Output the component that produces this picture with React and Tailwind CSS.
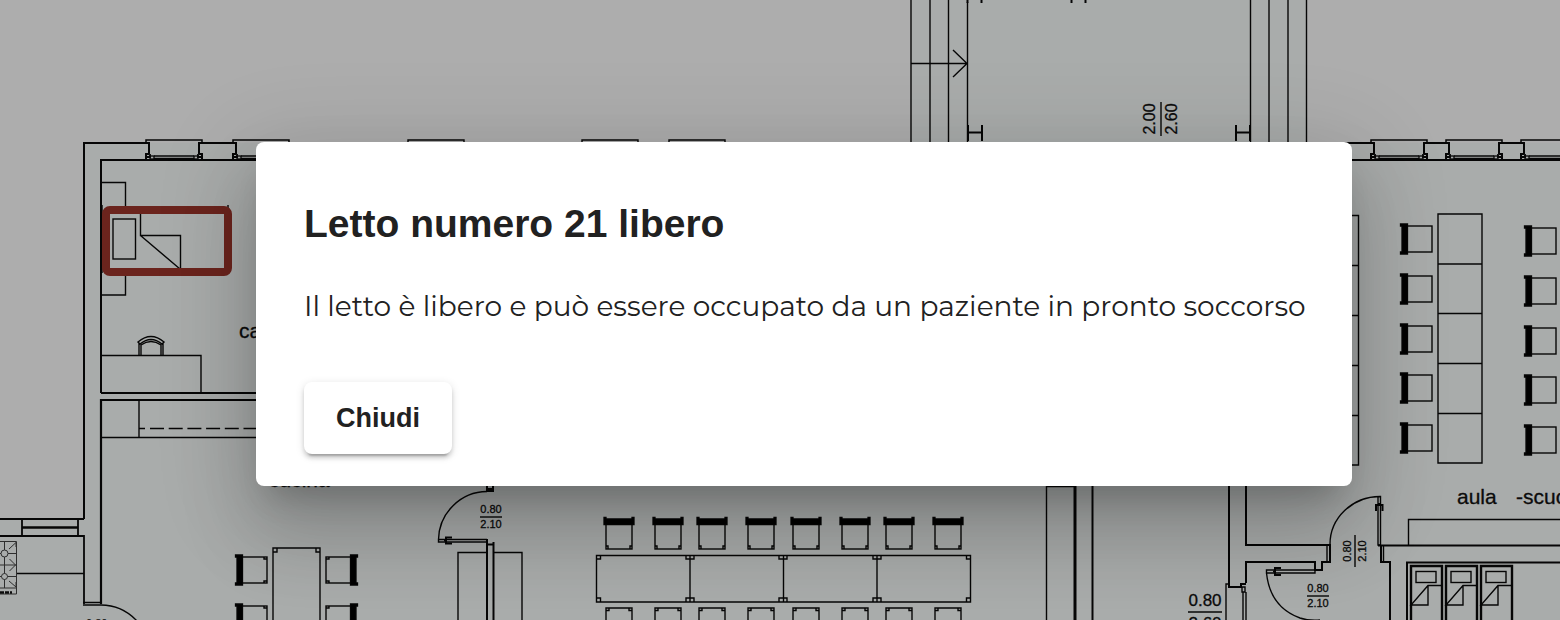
const WINDOWS = [146, 233, 1371, 1446, 1521];
const SILLS = [408, 582, 669];
const TABLE_SEATS = [606, 655, 699, 748, 793, 842, 886, 935];
const CLASS_ROWS = [0, 50, 100, 149, 199];
const WARD_BEDS = [1410, 1445, 1480];

function Window({ x }) {
  return (
    <g>
      <path d={`M${x} 143V140H${x + 56}V143`} strokeWidth="1.5" />
      <path d={`M${x + 8} 156H${x + 48}M${x + 8} 158.500H${x + 48}`} strokeWidth="1.4" />
      <path d={`M${x + 3} 154H${x}V160M${x + 53} 154H${x + 56}V160`} strokeWidth="2" />
      <path d={`M${x + 1} 157H${x + 4}V154M${x + 55} 157H${x + 52}V154`} strokeWidth="1.8" />
      <rect x={x + 4} y="156" width="4" height="3" strokeWidth="1.3" />
      <rect x={x + 48} y="156" width="4" height="3" strokeWidth="1.3" />
    </g>
  );
}

function Chair({ x, y, turn = 0, corners = true }) {
  return (
    <g transform={`translate(${x} ${y}) rotate(${turn})`}>
      <rect x="-9" y="-13" width="25" height="26" strokeWidth="1.4" />
      {corners && <path d="M13 -13V-11H16M13 13V11H16" strokeWidth="1.4" />}
      <path d="M-15.500 -15H-8.500V-13H-8.500V13H-8.500V15H-15.500V13H-14V-13H-15.500Z" fill="#000" strokeWidth="1.3" />
    </g>
  );
}

function Fraction({ x, y, top, bottom, size, half, turn = 0 }) {
  return (
    <g transform={`translate(${x} ${y}) rotate(${turn})`}>
      <path d={`M${-half} 0H${half}`} strokeWidth="1.4" />
      <g fill="#111" stroke="#111" strokeWidth="0.3" fontSize={size} textAnchor="middle">
        <text y={-size * 0.36}>{top}</text>
        <text y={size * 1.02}>{bottom}</text>
      </g>
    </g>
  );
}

function RoomName({ x, y, children }) {
  return (
    <text x={x} y={y} fontSize="21" fill="#111" stroke="#111" strokeWidth="0.3">
      {children}
    </text>
  );
}

function FloorPlan() {
  return (
    <svg
      aria-hidden="true"
      className="absolute inset-0 size-full"
      fill="none"
      stroke="#0a0a0a"
      strokeWidth="1.4"
      fontFamily='"Liberation Sans", Arial, sans-serif'
    >
      <path d="M911 0H1306V143H1600V700H0V519H84V143H911Z" fill="#fafefc" stroke="none" />

      {/* corridor and stairs */}
      <path d="M911 0V143M930 0V143M948.500 0V143M967.500 2V143M1250.500 0V143M1269 0V143M1288 0V143M1306.500 0V143" />
      <path d="M911 63.500H967M953 50L967 63.500L953 77" />
      <path d="M968 125V141M982 125V141M968 132.500H982M1236 125V141M1250 125V141M1236 132.500H1250" strokeWidth="2" />
      <path d="M967.500 0V3M981.500 0V3M1071.500 0V3M1085.500 0V3" strokeWidth="2" />
      <Fraction x={1161} y={119} top="2.00" bottom="2.60" size={16} half={17} turn={-90} />

      {/* outer walls */}
      <path d="M84 519V143H149V154M199 154V143H236V154M101 393V160H146M202 160H233" strokeWidth="2" />
      <path d="M146 160H202M233 160H290M1340 143H1374V154M1424 154V143H1449V154M1499 154V143H1524V154M1340 160H1560" strokeWidth="2" />
      {WINDOWS.map((x) => <Window key={x} x={x} />)}
      {SILLS.map((x) => <path key={x} d={`M${x} 154V140H${x + 56}V154`} />)}

      {/* bedroom */}
      <path d="M101 182.500H125.500V208M125.500 274V295H101M102 205V273M228 205V212" />
      <rect x="113" y="219" width="22.500" height="40" />
      <path d="M140.500 212V235.500H180.500V269M140.500 235.500L180 269" />
      <path d="M101 355.500H201V392" />
      <path d="M138 342Q151 331 164 342L162 344Q151 335 140 344ZM139 343V355M141 355V345Q151 338 161 345V355M163 343V355" />
      <RoomName x="239" y="338">camera</RoomName>
      <path d="M101 393H300M300 400H101V604" strokeWidth="2.200" />
      <path d="M139 400V437M101 437.500H300" />
      <path d="M139 428.500H145M150 428.500H300" strokeDasharray="14 4.700" />
      <RoomName x="269" y="487">cucina</RoomName>

      {/* kitchen corner */}
      <path d="M0 519H84M0 536H22V519M22 536H84V604M78 519V536" strokeWidth="1.800" />
      <path d="M22 527.500H78" strokeWidth="2.400" />
      <path d="M16 573.500H84M83 602.500H101M83 605H101Q122 605 137 621" />
      <g stroke="#444" strokeWidth="1">
        <path d="M0 541.500H16.500V594H0M0 553.500H16M0 565H16M0 576.500H16M4.500 541V588M9 549L16 542.500V547M9.500 559L15.500 565L9.500 571M9 581L16 587V582M0 588H16" />
        <circle cx="4.500" cy="553.500" r="3.500" fill="#fafefc" />
        <circle cx="4.500" cy="576.500" r="3" fill="#fafefc" />
        <path d="M0 592.500H12" stroke="#111" strokeWidth="2.500" strokeDasharray="4 1" />
      </g>
      <text x="86" y="627" fontSize="11" fill="#111" stroke="none">0.80</text>
      <Chair x={251} y={570} />
      <Chair x={251} y={619} />
      <Chair x={342} y={570} turn={180} />
      <Chair x={342} y={619} turn={180} />
      <path d="M273 630V548H320V630M273 552H277V548M316 548V552H320" />

      {/* kitchen door */}
      <path d="M487 485V491H493V485M487 489H493" strokeWidth="2" />
      <path d="M487 491.500A49 49 0 0 0 438.500 539.500V542H487M438.500 539.500H487" />
      <path d="M452 537.500H446V543.500H452M444 540.500H447" strokeWidth="2" />
      <path d="M487 539V620M493.500 542V620M487 544.500H493" strokeWidth="2" />
      <path d="M458 620V552.500H487M493 552.500H522V620" />
      <Fraction x={491} y={517} top="0.80" bottom="2.10" size={11} half={11} />

      {/* dining table */}
      {TABLE_SEATS.map((x) => (
        <g key={x}>
          <Chair x={x + 13} y={533} turn={90} />
          <path d={`M${x} 630V608H${x + 26}V630M${x} 610.500H${x + 3}V608M${x + 23} 608V610.500H${x + 26}`} />
        </g>
      ))}
      <path d="M596.500 555.500H970.500V602H596.500ZM690 555V602M783.500 555V602M877 555V602" />
      <path d="M596 559H600.500V555M596 598H600.500V602M970 559H966.500V555M970 598H966.500V602" />
      {[690, 783, 877].map((x) => (
        <path key={x} d={`M${x - 4} 555V559H${x + 4}V555M${x - 4} 602V598H${x + 4}V602`} />
      ))}

      {/* central walls */}
      <path d="M1046.500 620V486.500H1074" />
      <path d="M1075 480V620" strokeWidth="3" />
      <path d="M1092.500 480V620M1229 480V587H1241V584H1246M1246 480V545H1330V562H1322V570H1315V562H1246V583" strokeWidth="2" />
      <path d="M1226 620V584H1229M1243 592V620M1246 592V620M1327 545V562M1242 587H1245V592H1242Z" />
      <Fraction x={1205} y={612} top="0.80" bottom="2.60" size={17} half={17} />
      <path d="M1266.500 570V573H1315V570ZM1266.500 573Q1270 607 1300 618Q1309 621 1320 620" />
      <path d="M1281 568H1275V575H1281M1273 571.500H1276" strokeWidth="2" />
      <Fraction x={1318} y={596} top="0.80" bottom="2.10" size={11} half={11} />

      {/* classroom door */}
      <path d="M1330 545A50 48 0 0 1 1380.500 496.500V545H1378V497" />
      <path d="M1376 511V505H1382.500V511M1379 503V506" strokeWidth="2" />
      <Fraction x={1355} y={551} top="0.80" bottom="2.10" size={11} half={16} turn={-90} />
      <path d="M1378 545.500H1560M1381 546V562H1390V620M1407 620V562.500H1560" strokeWidth="2" />
      <path d="M1383.500 546V562M1408.500 545V519.500H1560" />
      <RoomName x="1457" y="504">aula</RoomName>
      <RoomName x="1516" y="504">-scuola</RoomName>

      {/* classroom desks */}
      <path d="M1340 215.500H1358.500V465H1340M1340 265.500H1358M1340 315.500H1358M1340 365.500H1358M1340 415.500H1358" />
      <path d="M1438 214H1482V463H1438ZM1438 264H1482M1438 313.500H1482M1438 363.500H1482M1438 413.500H1482" />
      {CLASS_ROWS.map((y) => (
        <g key={y}>
          <Chair x={1416} y={239 + y} corners={false} />
          <Chair x={1540} y={241 + y} corners={false} />
        </g>
      ))}

      {/* ward beds */}
      {WARD_BEDS.map((x) => (
        <g key={x}>
          <path d={`M${x + 1} 620V566H${x + 32}V620`} strokeWidth="2.400" />
          <rect x={x + 6} y="571.500" width="20" height="11" />
          <path d={`M${x + 32} 585.500H${x + 18}L${x + 1} 605H${x + 18}V585.500`} />
        </g>
      ))}
    </svg>
  );
}

export default function App() {
  return (
    <div className="relative min-h-screen overflow-hidden bg-white">
      <FloorPlan />
      <button
        type="button"
        aria-label="Letto numero 21"
        className="absolute top-[206px] left-[102px] h-[70px] w-[130px] rounded-lg border-8 border-[#9e352b]"
      />
      <div className="relative min-h-screen bg-black/32 pt-[142px] pr-52 pb-32 pl-64">
        <div
          role="dialog"
          aria-modal="true"
          aria-labelledby="dialog-title"
          className="rounded-lg bg-white px-12 pt-12 pb-8 font-['Liberation_Sans',Arial,sans-serif] text-[#212121] shadow-[0_22px_30px_-14px_rgba(0,0,0,0.2),0_48px_76px_6px_rgba(0,0,0,0.14),0_18px_92px_16px_rgba(0,0,0,0.12)]"
        >
          <h2 id="dialog-title" className="text-[39px] leading-[68px] font-bold">
            Letto numero 21 libero
          </h2>
          <p className="mt-7 font-[Montserrat,Inter,sans-serif] text-[28px] leading-10 whitespace-nowrap">
            Il letto è libero e può essere occupato da un paziente in pronto soccorso
          </p>
          <button
            type="button"
            className="mt-14 block rounded-lg bg-white px-8 text-[27px] leading-[72px] font-bold shadow-[0_6px_2px_-4px_rgba(0,0,0,0.2),0_4px_4px_0_rgba(0,0,0,0.14),0_2px_10px_0_rgba(0,0,0,0.12)]"
          >
            Chiudi
          </button>
        </div>
      </div>
    </div>
  );
}
